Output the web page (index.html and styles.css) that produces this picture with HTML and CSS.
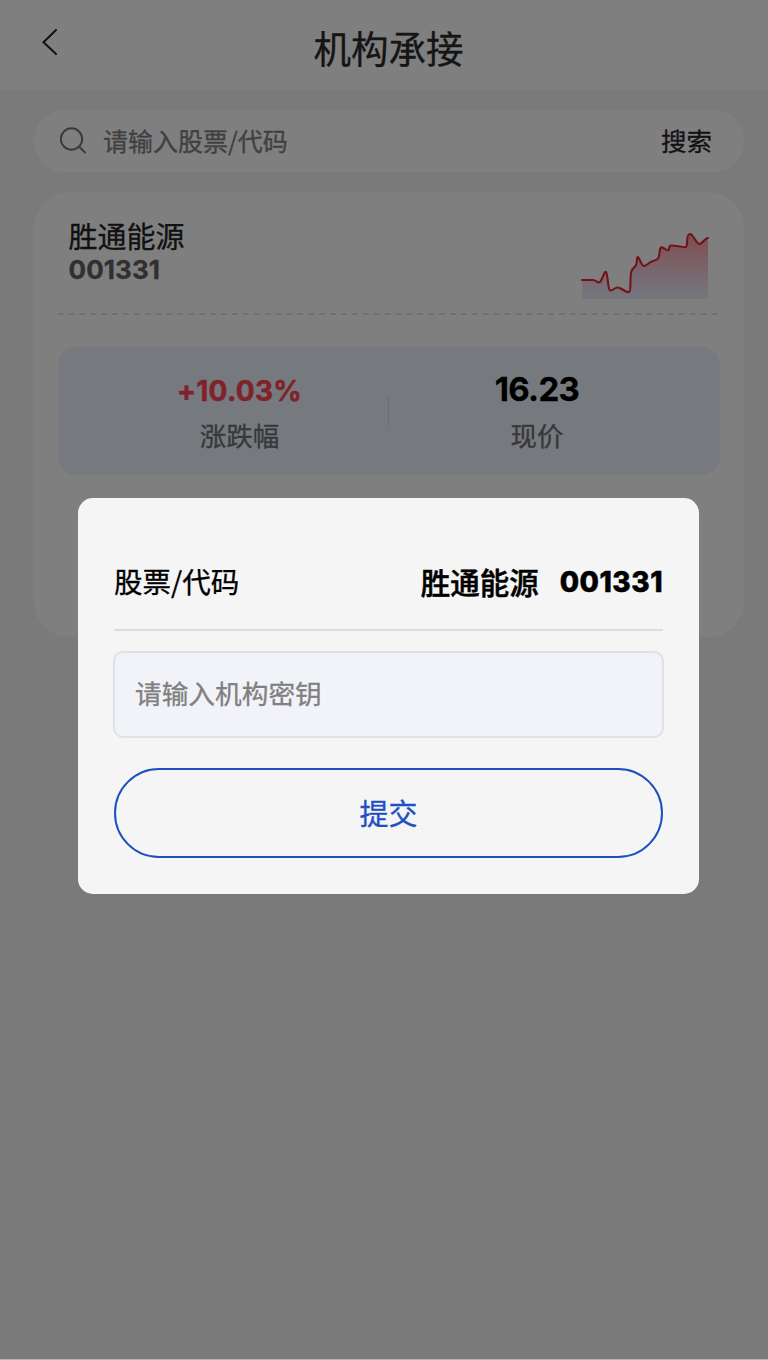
FILE: index.html
```html
<!DOCTYPE html>
<html lang="zh-CN">
<head>
<meta charset="utf-8">
<title>机构承接</title>
<link rel="stylesheet" href="styles.css">
</head>
<body>
<div class="page">
  <header class="header">
    <svg class="back" viewBox="0 0 18 28" width="18" height="28"><path d="M15 2 2.500 14.200 15 26"/></svg>
    <h1 class="title">机构承接</h1>
  </header>
  <main class="content">
    <div class="search">
      <svg class="search-icon" viewBox="0 0 28 28" width="28" height="28"><circle cx="11.500" cy="12" r="10.700"/><path d="m19.500 20 5.500 5.500"/></svg>
      <span class="search-hint">请输入股票/代码</span>
      <span class="search-action">搜索</span>
    </div>
    <section class="card">
      <div class="stock">
        <div class="stock-info">
          <div class="stock-name">胜通能源</div>
          <div class="stock-code num">001331</div>
        </div>
        <svg class="chart" viewBox="0 0 130 68" width="130" height="68">
          <defs><linearGradient id="area" x1="0" y1="0" x2="0" y2="1"><stop offset="0" stop-color="#ff3040" stop-opacity=".5"/><stop offset="1" stop-color="#d0d0ff" stop-opacity=".38"/></linearGradient></defs>
          <path class="chart-area" fill="url(#area)" d="M2 48H13C16 48 18 52 20 50C22 49 24 39 26 40C28 43 28 58 30 58.500C33 59 35 55 38 55.500C42 56 46 61 49 60C52 59 49 42 52 38C54 34 57 36 57 27C58 20 61 34 64 34C67 34 69 30 73 29C80 27 79 25 80 17C81 12 87 20 88.500 18C90 17 88 14 91 13.500C94 13 104 16 106 15C108 14 106 3 109 2.500C113 0 116 13 120 12C123 11 125 6 128 6V67H2Z"/>
          <path class="chart-line" d="M2 48H13C16 48 18 52 20 50C22 49 24 39 26 40C28 43 28 58 30 58.500C33 59 35 55 38 55.500C42 56 46 61 49 60C52 59 49 42 52 38C54 34 57 36 57 27C58 20 61 34 64 34C67 34 69 30 73 29C80 27 79 25 80 17C81 12 87 20 88.500 18C90 17 88 14 91 13.500C94 13 104 16 106 15C108 14 106 3 109 2.500C113 0 116 13 120 12C123 11 125 6 128 6"/>
        </svg>
      </div>
      <div class="dashes"></div>
      <div class="quote">
        <div class="metric"><span class="value rise num">+10.03%</span><span class="label">涨跌幅</span></div>
        <i class="separator"></i>
        <div class="metric"><span class="value price num">16.23</span><span class="label">现价</span></div>
      </div>
    </section>
  </main>
</div>
<div class="overlay">
  <div class="modal">
    <div class="modal-row">
      <span>股票/代码</span>
      <span class="modal-stock">胜通能源<b class="num modal-code">001331</b></span>
    </div>
    <div class="field">请输入机构密钥</div>
    <div class="submit">提交</div>
  </div>
</div>
</body>
</html>
```
FILE: styles.css
```css
* { box-sizing: border-box; }
html, body { margin: 0; height: 1360px; overflow: hidden; background: #b5b5b5; }
body { position: relative; font-family: "Noto Sans CJK SC", sans-serif; color: #222; -webkit-text-stroke: .3px currentColor; }
.num { font-family: Inter, sans-serif; font-weight: 700; }
.page { width: 777px; height: 1359px; background: #f5f5f5; }
.header { position: relative; height: 90px; background: #fff; display: flex; justify-content: center; align-items: center; padding-top: 4px; }
.back { position: absolute; left: 41px; top: 28px; fill: none; stroke: #222; stroke-width: 2; stroke-linecap: round; }
.title { margin: 0; font-size: 37.5px; line-height: 54px; font-weight: 400; color: #2b2b2b; }
.content { padding: 20px 33.5px; display: flex; flex-direction: column; gap: 20px; }
.search { height: 62px; border-radius: 31px; background: #fff; display: flex; align-items: center; padding: 0 31.5px 0 26.5px; }
.search-icon { fill: none; stroke: #77777c; stroke-width: 2; stroke-linecap: round; }
.search-hint { margin: 0 0 3px 15px; flex: 1; font-size: 25px; line-height: 38px; color: #808087; }
.search-action { margin-bottom: 3px; font-size: 25.5px; line-height: 38px; color: #26272b; }
.card { height: 445px; border-radius: 36px; background: #fff; padding: 25px 24px 0; }
.stock { display: flex; justify-content: space-between; height: 96px; padding: 0 10px 0 11px; }
.stock-name { font-size: 29px; line-height: 36px; }
.stock-code { font-size: 26px; line-height: 34px; letter-spacing: .1px; color: #606060; }
.chart { margin-top: 15px; }
.chart-line { fill: none; stroke: #e52732; stroke-width: 2.1; stroke-linecap: round; stroke-linejoin: round; }
.dashes { height: 2px; background: repeating-linear-gradient(90deg, #d8d8d8 0 5px, transparent 6px 10px, #d8d8d8 10.9px); opacity: .8; }
.quote { margin-top: 32px; height: 128px; padding: 0 32px; border-radius: 18px; background: #edf4fd; display: flex; align-items: center; }
.metric { width: 298px; display: flex; flex-direction: column; align-items: center; }
.metric:first-child { padding-left: 2px; }
.metric:last-child { padding-right: 2px; }
.value { height: 48px; line-height: 48px; }
.rise { font-size: 28px; line-height: 52px; letter-spacing: .3px; color: #ff4756; -webkit-text-stroke-width: .5px; }
.price { font-size: 33px; letter-spacing: -.7px; color: #000; }
.label { font-size: 26.5px; line-height: 44px; color: #707070; }
.separator { width: 1.5px; height: 29px; background: #e2d8d6; }
.overlay { position: absolute; left: 0; top: 0; width: 777px; height: 1359px; background: rgba(0, 0, 0, .5); display: flex; justify-content: center; align-items: flex-start; padding-top: 498px; }
.modal { width: 621px; height: 396px; border-radius: 15px; background: #f5f5f5; padding: 36px 36px 0; color: #000; }
.modal-row { height: 97px; border-bottom: 2px solid #ddd; display: flex; justify-content: space-between; align-items: center; font-size: 28.5px; line-height: 42px; padding-bottom: 2px; }
.modal-stock { display: flex; align-items: center; font-weight: 500; font-size: 29.5px; -webkit-text-stroke-width: .5px; }
.modal-code { margin: 2px 0 0 21px; font-size: 28px; font-weight: 800; letter-spacing: .5px; }
.field { margin: 20px -1px 0; height: 87px; border: 2px solid #e0e1e4; border-radius: 10px; background: #f1f3f8; padding: 0 20px 4px; display: flex; align-items: center; font-size: 26.7px; color: #808080; }
.submit { margin-top: 30px; height: 90px; border: 2px solid #1e50bd; border-radius: 45px; display: flex; justify-content: center; align-items: center; padding-bottom: 2px; font-size: 29px; font-weight: 400; color: #204fc1; }
```
